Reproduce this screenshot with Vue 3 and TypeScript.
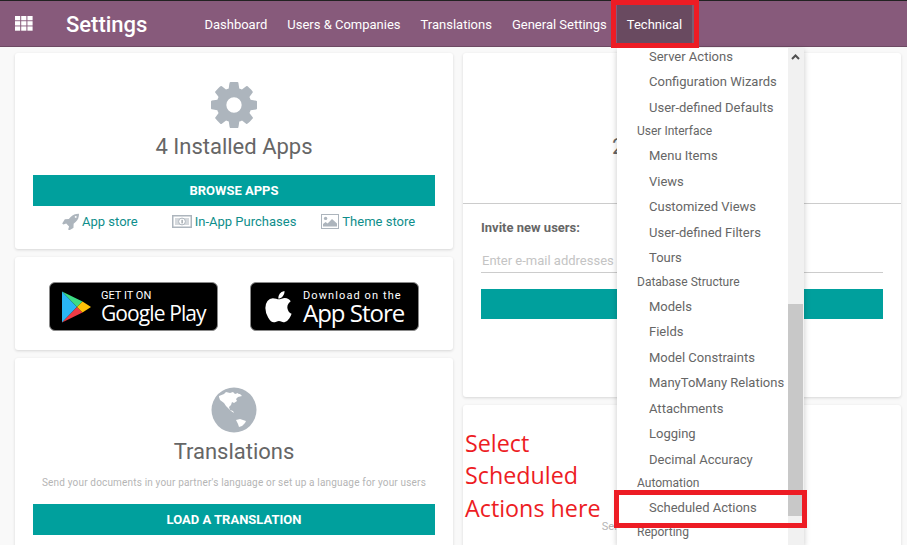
<script setup lang="ts">
interface MenuRow {
  label: string
  header?: boolean
}

const navItems: string[] = ["Dashboard", "Users & Companies", "Translations", "General Settings"]

const menuRows: MenuRow[] = [
  { label: "Server Actions" },
  { label: "Configuration Wizards" },
  { label: "User-defined Defaults" },
  { label: "User Interface", header: true },
  { label: "Menu Items" },
  { label: "Views" },
  { label: "Customized Views" },
  { label: "User-defined Filters" },
  { label: "Tours" },
  { label: "Database Structure", header: true },
  { label: "Models" },
  { label: "Fields" },
  { label: "Model Constraints" },
  { label: "ManyToMany Relations" },
  { label: "Attachments" },
  { label: "Logging" },
  { label: "Decimal Accuracy" },
  { label: "Automation", header: true },
  { label: "Scheduled Actions" },
  { label: "Reporting", header: true },
]

const cogPath =
  "M1152 896q0-106-75-181t-181-75-181 75-75 181 75 181 181 75 181-75 75-181zm512-109v222q0 12-8 23t-20 13l-185 28q-19 54-39 91 35 50 107 138 10 12 10 25t-9 23q-27 37-99 108t-94 71q-12 0-26-9l-138-108q-44 23-91 38-16 136-29 186-7 28-36 28h-222q-14 0-24.5-8.5t-11.5-21.5l-28-184q-49-16-90-37l-141 107q-10 9-25 9-14 0-25-11-126-114-165-168-7-10-7-23 0-12 8-23 15-21 51-66.5t54-70.5q-27-50-41-99l-183-27q-13-2-21-12.5t-8-23.5v-222q0-12 8-23t19-13l186-28q14-46 39-92-40-57-107-138-10-12-10-24 0-10 9-23 26-36 98.5-107.5t94.5-71.5q13 0 26 10l138 107q44-23 91-38 16-136 29-186 7-28 36-28h222q14 0 24.5 8.5t11.5 21.5l28 184q49 16 90 37l142-107q9-9 24-9 13 0 25 10 129 119 165 170 7 8 7 22 0 12-8 23-15 21-51 66.5t-54 70.5q26 50 41 98l183 28q13 2 21 12.5t8 23.5z"
const rocketPath =
  "M1504 448q0-40-28-68t-68-28-68 28-28 68 28 68 68 28 68-28 28-68zm224-288q0 249-75.5 430.5t-253.5 360.5q-81 80-195 176l-20 379q-2 16-16 26l-384 224q-7 4-16 4-12 0-23-9l-64-64q-13-14-8-32l85-276-281-281-276 85q-3 1-9 1-14 0-23-9l-64-64q-17-19-5-39l224-384q10-14 26-16l379-20q96-114 176-195 188-187 358-258t431-71q14 0 24 9.5t10 22.5z"
const applePath =
  "M1585 1215q-39 125-123 250-129 196-257 196-49 0-140-32-86-32-151-32-61 0-142 33-81 34-132 34-152 0-301-259-147-261-147-503 0-228 113-374 113-144 284-144 72 0 177 30 104 30 138 30 45 0 143-34 102-34 173-34 119 0 213 65 52 36 104 100-79 67-114 118-65 94-65 207 0 124 69 223t158 126zm-376-1173q0 61-29 136-30 75-93 138-54 54-108 72-37 11-104 17 3-149 78-257 74-107 250-148 1 3 2.5 11t2.5 11q0 4 .5 10t.5 10z"
</script>

<template>
  <div class="page">
    <header class="navbar">
      <svg class="apps" width="18" height="15" viewBox="0 0 18 15">
        <g fill="#fff">
          <rect v-for="n in 9" :key="n" :x="((n - 1) % 3) * 6.2" :y="Math.floor((n - 1) / 3) * 5.2" width="5.2" height="4.3" />
        </g>
      </svg>
      <span class="brand">Settings</span>
      <nav class="menu">
        <a v-for="item in navItems" :key="item">{{ item }}</a>
        <a class="active">Technical</a>
      </nav>
    </header>

    <main class="columns">
      <div class="column">
        <section class="card apps-card">
          <svg class="big-icon" width="46" height="46" viewBox="128 128 1536 1536"><path :d="cogPath" fill="#adb5bd" /></svg>
          <h2>4 Installed Apps</h2>
          <button class="action" type="button">BROWSE APPS</button>
          <div class="links">
            <a class="link-store">
              <svg width="17" height="17" viewBox="64 64 1664 1664"><path :d="rocketPath" fill="#adb5bd" /></svg>
              App store
            </a>
            <a class="link-purchases">
              <svg width="20" height="13" viewBox="0 0 20 13">
                <rect x="0.75" y="0.75" width="18.5" height="11.5" fill="#fff" stroke="#adb5bd" stroke-width="1.5" />
                <rect x="3" y="3" width="14" height="7" fill="#d5d9dd" />
                <circle cx="10" cy="6.5" r="3.4" fill="#fff" stroke="#adb5bd" />
                <rect x="9.5" y="4.8" width="1.2" height="3.6" fill="#8d959c" />
              </svg>
              In-App Purchases
            </a>
            <a class="link-theme">
              <svg width="18" height="15" viewBox="0 0 18 15">
                <rect x="0.5" y="0.5" width="17" height="14" fill="#fff" stroke="#adb5bd" />
                <circle cx="4.6" cy="4.4" r="1.7" fill="#adb5bd" />
                <path d="M2 12.5V10l2.6-2 2 1.4L11 5l5 4.6v2.9z" fill="#adb5bd" />
              </svg>
              Theme store
            </a>
          </div>
        </section>

        <section class="card stores">
          <div class="badge">
            <svg width="31" height="34" viewBox="0 0 31 34">
              <path d="M1 1.5v31L16 17z" fill="#29b6f6" />
              <path d="M1 1.5 16 17l5.5-5.5z" fill="#3ddc84" />
              <path d="M1 32.5 16 17l5.5 5.5z" fill="#ef3b45" />
              <path d="M21.500 11.500 30 17l-8.500 5.500L16 17z" fill="#ffc107" />
            </svg>
            <div class="badge-text">
              <span class="small google-small">GET IT ON</span>
              <span class="large google-large">Google Play</span>
            </div>
          </div>
          <div class="badge apple">
            <svg width="27" height="32" viewBox="180 0 1420 1700"><path :d="applePath" fill="#fff" /></svg>
            <div class="badge-text">
              <span class="small apple-small">Download on the</span>
              <span class="large apple-large">App Store</span>
            </div>
          </div>
        </section>

        <section class="card translations">
          <svg class="big-icon" width="46" height="46" viewBox="0 0 46 46">
            <circle cx="23" cy="23" r="22.500" fill="#adb5bd" />
            <path d="M8 9l5-2 2-2 4 1 3-1 2 2 5 0 2 2-4 1-2 2 1 2-3 2-2-1-1 3-2 2 1 3 3 1 1 2 3 1-3-1-3-2-3-3-2-2-2-3-4-3-1-3z" fill="#fff" />
            <path d="M25 33l4-1 3 1 3 1-1 2-3 3-3 1-1-3z" fill="#fff" />
            <path d="M24 7l3-1 1 2-3 1z" fill="#fff" />
          </svg>
          <h2>Translations</h2>
          <p>Send your documents in your partner's language or set up a language for your users</p>
          <button class="action" type="button">LOAD A TRANSLATION</button>
        </section>
      </div>

      <div class="column">
        <section class="card users">
          <div class="users-top">
            <svg class="big-icon" width="46" height="46" viewBox="128 128 1536 1536"><path :d="cogPath" fill="#adb5bd" /></svg>
            <h2>2 Active Users</h2>
          </div>
          <div class="invite">
            <label>Invite new users:</label>
            <div class="email">Enter e-mail addresses</div>
            <button class="action" type="button">INVITE</button>
          </div>
        </section>

        <section class="card share">
          <p>Send your documents</p>
        </section>
      </div>
    </main>

    <!-- open dropdown lies over the page -->
    <div class="dropdown">
      <div class="rows">
        <div v-for="row in menuRows" :key="row.label" :class="row.header ? 'row-header' : 'row-item'">{{ row.label }}</div>
      </div>
      <div class="scrollbar">
        <svg width="9" height="6" viewBox="0 0 9 6"><path d="M1 5l3.500-3.500L8 5" fill="none" stroke="#505050" stroke-width="2" /></svg>
        <div class="thumb"></div>
      </div>
    </div>

    <!-- screenshot annotations -->
    <div class="mark mark-tab"></div>
    <div class="mark mark-item"></div>
    <div class="note">Select<br />Scheduled<br />Actions here</div>
  </div>
</template>

<style>
html,
body {
  margin: 0;
  background: #f9f9f9;
}
</style>

<style scoped>
.page {
  position: relative;
  width: 907px;
  height: 545px;
  overflow: hidden;
  background: #f9f9f9;
  font-family: Roboto, "Liberation Sans", sans-serif;
  color: #666;
}

.navbar {
  display: flex;
  align-items: center;
  box-sizing: border-box;
  height: 47px;
  padding-left: 15px;
  background: #875a7b;
  border-top: 1px solid #222;
  border-bottom: 1px solid #6d4a63;
  color: #fff;
}

.apps {
  flex: none;
}

.brand {
  margin-left: 33px;
  padding-top: 2px;
  font-size: 22px;
  font-weight: 500;
}

.menu {
  display: flex;
  align-self: stretch;
  margin-left: 47px;
  font-size: 13px;
}

.menu a {
  display: flex;
  align-items: center;
  padding: 2px 10px 0;
}

.menu a.active {
  background: #694a60;
  border-right: 2px solid #7a5f74;
}

.columns {
  display: grid;
  grid-template-columns: 438px 438px;
  gap: 10px;
  padding: 6px 0 0 15px;
}

.column {
  display: flex;
  flex-direction: column;
  gap: 8px;
}

.card {
  box-sizing: border-box;
  background: #fff;
  border-radius: 3px;
  box-shadow: 0 1px 3px rgba(0, 0, 0, 0.14);
}

.card h2 {
  margin: 0;
  font-size: 22px;
  font-weight: 400;
  line-height: 30px;
  color: #666;
}

.big-icon {
  display: block;
}

.action {
  display: block;
  width: 100%;
  height: 31px;
  padding: 0;
  border: 0;
  background: #00a09d;
  color: #fff;
  font-family: inherit;
  font-size: 13px;
  font-weight: 700;
}

.apps-card {
  display: flex;
  flex-direction: column;
  align-items: center;
  height: 196px;
  padding: 29px 18px 0;
}

.apps-card h2 {
  margin-top: 4px;
}

.apps-card .action {
  margin-top: 13px;
}

.links {
  position: relative;
  display: flex;
  align-items: center;
  align-self: stretch;
  height: 15px;
  margin-top: 8px;
  padding-left: 29px;
  font-size: 13px;
  color: #0e8e8b;
}

.links a {
  display: flex;
  align-items: center;
  gap: 3px;
}

.link-purchases {
  margin-left: 34px;
}

.link-theme {
  margin-left: 25px;
}

.stores {
  display: flex;
  justify-content: center;
  gap: 32px;
  align-items: center;
  height: 93px;
  padding-top: 6px;
}

.badge {
  display: flex;
  align-items: center;
  gap: 9px;
  box-sizing: border-box;
  width: 169px;
  height: 49px;
  padding-left: 11px;
  background: #000;
  border: 1px solid #8a8a8a;
  border-radius: 6px;
  color: #fff;
}

.badge.apple {
  gap: 11px;
  padding-left: 14px;
}

.badge-text {
  display: flex;
  flex-direction: column;
}

.small {
  margin-top: 2px;
  font-size: 10px;
  line-height: 12px;
}

.large {
  margin-top: -2px;
  line-height: 26px;
}

.google-small {
  font-size: 11px;
}

.google-large {
  font-family: "Open Sans", sans-serif;
  font-size: 21px;
  letter-spacing: -0.9px;
}

.apple-small {
  font-size: 11px;
  letter-spacing: 1.1px;
}

.apple-large {
  font-family: "Open Sans", sans-serif;
  font-size: 24px;
  letter-spacing: -1px;
}

.translations {
  display: flex;
  flex-direction: column;
  align-items: center;
  height: 220px;
  padding: 29px 18px 0;
}

.translations h2 {
  margin-top: 4px;
}

.translations p {
  margin: 9px 0 14px;
  font-size: 10px;
  line-height: 14px;
  color: #b5b5b5;
  letter-spacing: 0.17px;
  white-space: nowrap;
}

.users {
  height: 344px;
}

.users-top {
  display: flex;
  flex-direction: column;
  align-items: center;
  box-sizing: border-box;
  height: 151px;
  padding-top: 29px;
  border-bottom: 1px solid #ccc;
}

.users-top h2 {
  margin-top: 4px;
}

.invite {
  padding: 16px 18px 0;
}

.invite label {
  display: block;
  font-size: 13px;
  font-weight: 700;
  line-height: 16px;
  color: #666;
}

.email {
  box-sizing: border-box;
  height: 37px;
  padding: 16px 0 0 1px;
  border-bottom: 1px solid #ccc;
  font-size: 13px;
  line-height: 17px;
  color: #c4c4c4;
}

.invite .action {
  margin-top: 16px;
  height: 30px;
}

.share {
  height: 160px;
  padding-top: 115px;
  text-align: center;
}

.share p {
  margin: 0;
  font-size: 11px;
  color: #b5b5b5;
  word-spacing: 27px;
}

.dropdown {
  position: absolute;
  top: 48px;
  left: 617px;
  bottom: 0;
  display: flex;
  width: 187px;
  overflow: hidden;
  background: #fff;
  box-shadow: 0 2px 6px rgba(0, 0, 0, 0.22);
}

.rows {
  flex: 1;
  margin-top: -4.500px;
  font-size: 13px;
  white-space: nowrap;
}

.row-item {
  height: 25.500px;
  padding-left: 32px;
  line-height: 25.500px;
}

.row-header {
  height: 23px;
  padding-left: 20px;
  font-size: 12px;
  line-height: 23px;
}

.scrollbar {
  position: relative;
  flex: none;
  width: 16px;
  background: #f1f1f1;
}

.scrollbar svg {
  position: absolute;
  top: 6px;
  left: 3px;
}

.thumb {
  position: absolute;
  top: 256px;
  left: 0;
  width: 15px;
  height: 212px;
  background: #c8c8c8;
}

.mark {
  position: absolute;
  box-sizing: border-box;
  border: 5px solid #ed1c24;
}

.mark-tab {
  top: 0;
  left: 611px;
  width: 88px;
  height: 48px;
}

.mark-item {
  top: 490px;
  left: 614px;
  width: 193px;
  height: 38px;
}

.note {
  position: absolute;
  top: 426.500px;
  left: 465px;
  font-family: "Open Sans", sans-serif;
  font-size: 23.300px;
  line-height: 32.500px;
  color: #ed1c24;
}
</style>
